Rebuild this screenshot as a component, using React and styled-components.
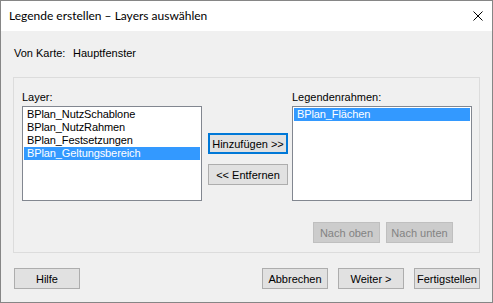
import React from 'react'
import styled, { createGlobalStyle } from 'styled-components'

const GlobalStyle = createGlobalStyle`
  html, body {
    margin: 0;
    padding: 0;
    background: #ffffff;
  }
  * {
    box-sizing: border-box;
  }
`

const Window = styled.div`
  width: 493px;
  height: 303px;
  border: 1px solid #868686;
  display: flex;
  flex-direction: column;
  background: #f0f0f0;
  font-family: "Liberation Sans", Arial, sans-serif;
  font-size: 11px;
  color: #000;
`

const TitleBar = styled.div`
  height: 30px;
  background: #fff;
  display: flex;
  align-items: center;
  justify-content: space-between;
  padding: 0 9px 0 8px;
`

const Title = styled.span`
  font-family: Lato, "Noto Sans", sans-serif;
  font-size: 12px;
  line-height: 16px;
`

const CloseIcon = styled.svg`
  width: 10px;
  height: 10px;
  display: block;
`

const Body = styled.div`
  flex: 1;
  padding: 16px 12px 0 12px;
  display: flex;
  flex-direction: column;
`

const InfoRow = styled.div`
  display: flex;
  line-height: 13px;
  padding-left: 1px;
`

const InfoLabel = styled.span`
  width: 59px;
`

const Panel = styled.div`
  margin-top: 17px;
  height: 176px;
  border: 1px solid #dcdcdc;
  padding: 13px 0 0 8px;
  display: flex;
  align-items: flex-start;
`

const Column = styled.div`
  display: flex;
  flex-direction: column;
  margin-left: ${p => p.$offset || 0}px;
`

const Label = styled.div`
  line-height: 13px;
  margin-bottom: 2px;
`

const ListBox = styled.div`
  width: 180px;
  height: 95px;
  background: #fff;
  border: 1px solid #828790;
  padding: 1px;
`

const ListItem = styled.div`
  height: 13px;
  line-height: 13px;
  padding-left: 3px;
  white-space: nowrap;
  letter-spacing: -0.1px;
  background: ${p => (p.$selected ? '#3399ff' : 'transparent')};
  color: ${p => (p.$selected ? '#fff' : '#000')};
`

const MoveButtons = styled.div`
  margin-top: 42px;
  display: flex;
  flex-direction: column;
  gap: 10px;
`

const Button = styled.button`
  width: ${p => p.$width || 66}px;
  height: 21px;
  padding: 0;
  margin: 0;
  font-family: "Liberation Sans", Arial, sans-serif;
  font-size: 11px;
  background: ${p => (p.disabled ? '#cccccc' : '#e1e1e1')};
  color: ${p => (p.disabled ? '#838383' : '#000')};
  border: ${p => (p.$focused ? '2px solid #0078d7' : p.disabled ? '1px solid #bfbfbf' : '1px solid #adadad')};
  border-radius: 0;
  outline: none;
`

const OrderRow = styled.div`
  margin-top: 21px;
  margin-right: 19px;
  display: flex;
  justify-content: flex-end;
  gap: 6px;
`

const Footer = styled.div`
  margin-top: 15px;
  padding-left: 1px;
  display: flex;
  align-items: center;
`

const FooterGroup = styled.div`
  margin-left: auto;
  display: flex;
  gap: 10px;
`

const layers = ['BPlan_NutzSchablone', 'BPlan_NutzRahmen', 'BPlan_Festsetzungen', 'BPlan_Geltungsbereich']

export default function App() {
  return (
    <>
      <GlobalStyle />
      <Window>
        <TitleBar>
          <Title>Legende erstellen – Layers auswählen</Title>
          <CloseIcon viewBox="0 0 10 10">
            <path d="M0.5 0.5 L9.5 9.5 M9.5 0.5 L0.5 9.5" stroke="#000" strokeWidth="1" fill="none" />
          </CloseIcon>
        </TitleBar>
        <Body>
          <InfoRow>
            <InfoLabel>Von Karte:</InfoLabel>
            <span>Hauptfenster</span>
          </InfoRow>
          <Panel>
            <Column>
              <Label>Layer:</Label>
              <ListBox>
                {layers.map((l, i) => (
                  <ListItem key={l} $selected={i === 3}>{l}</ListItem>
                ))}
              </ListBox>
            </Column>
            <Column $offset={6}>
              <MoveButtons>
                <Button $width={80} $focused>Hinzufügen &gt;&gt;</Button>
                <Button $width={80}>&lt;&lt; Entfernen</Button>
              </MoveButtons>
            </Column>
            <Column $offset={4}>
              <Label>Legendenrahmen:</Label>
              <ListBox>
                <ListItem $selected>BPlan_Flächen</ListItem>
              </ListBox>
              <OrderRow>
                <Button $width={67} disabled>Nach oben</Button>
                <Button $width={67} disabled>Nach unten</Button>
              </OrderRow>
            </Column>
          </Panel>
          <Footer>
            <Button>Hilfe</Button>
            <FooterGroup>
              <Button>Abbrechen</Button>
              <Button>Weiter &gt;</Button>
              <Button>Fertigstellen</Button>
            </FooterGroup>
          </Footer>
        </Body>
      </Window>
    </>
  )
}
